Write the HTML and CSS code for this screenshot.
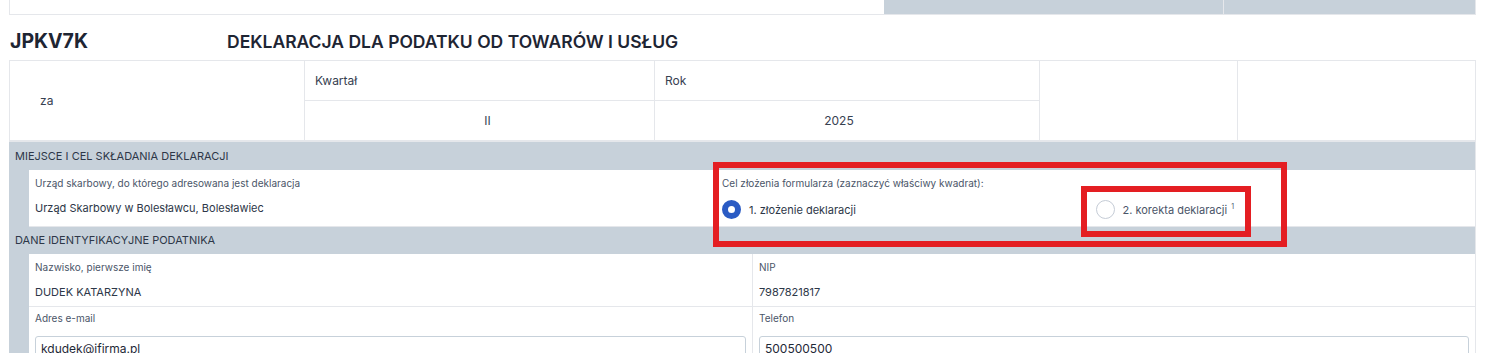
FILE: index.html
```html
<!DOCTYPE html>
<html lang="pl">
<head>
  <meta charset="UTF-8" />
  <meta name="viewport" content="width=device-width, initial-scale=1.0"/>
  <title>JPKV7K</title>
  <link rel="stylesheet" href="styles.css">
</head>
<body>
  <div class="page">
    <!-- end of previous block -->
    <div class="top-strip">
      <div class="top-blank"></div>
      <div class="top-cell"></div>
      <div class="top-cell last"></div>
    </div>

    <div class="title-row">
      <h1 class="code">JPKV7K</h1>
      <h2 class="title">DEKLARACJA DLA PODATKU OD TOWARÓW I USŁUG</h2>
    </div>

    <div class="period">
      <div class="p-za">za</div>
      <div class="p-label quarter">Kwartał</div>
      <div class="p-label year">Rok</div>
      <div class="p-value quarter">II</div>
      <div class="p-value year">2025</div>
      <div class="p-empty first"></div>
      <div class="p-empty last"></div>
    </div>

    <div class="section">
      <div class="section-head">MIEJSCE I CEL SKŁADANIA DEKLARACJI</div>
      <div class="section-body">
        <div class="row purpose">
          <div class="field">
            <div class="label">Urząd skarbowy, do którego adresowana jest deklaracja</div>
            <div class="value">Urząd Skarbowy w Bolesławcu, Bolesławiec</div>
          </div>
          <div class="field">
            <div class="label">Cel złożenia formularza (zaznaczyć właściwy kwadrat):</div>
            <div class="options">
              <label class="option checked"><span class="radio"></span><span>1. złożenie deklaracji</span></label>
              <label class="option"><span class="radio"></span><span>2. korekta deklaracji <sup>1</sup></span></label>
            </div>
          </div>
        </div>
      </div>
    </div>

    <div class="section">
      <div class="section-head">DANE IDENTYFIKACYJNE PODATNIKA</div>
      <div class="section-body">
        <div class="row split">
          <div class="field">
            <div class="label">Nazwisko, pierwsze imię</div>
            <div class="value">DUDEK KATARZYNA</div>
          </div>
          <div class="field">
            <div class="label">NIP</div>
            <div class="value">7987821817</div>
          </div>
        </div>
        <div class="row split contact">
          <div class="field">
            <div class="label">Adres e-mail</div>
            <input class="input" type="text" value="kdudek@ifirma.pl">
          </div>
          <div class="field">
            <div class="label">Telefon</div>
            <input class="input" type="text" value="500500500">
          </div>
        </div>
      </div>
    </div>
  </div>

  <!-- annotation frames -->
  <div class="mark mark-outer"></div>
  <div class="mark mark-inner"></div>
</body>
</html>
```

FILE: styles.css
```css
body {
  margin: 0;
  font-family: Inter, "Noto Sans", sans-serif;
  color: #1f2937;
  background: #fff;
  overflow: hidden;
}
.page {
  margin-left: 9px;
  width: 1467px;
}
.top-strip {
  display: flex;
  height: 14px;
  border-left: 1px solid #e5e7eb;
  border-bottom: 1px solid #e5e7eb;
}
.top-blank {
  width: 874px;
}
.top-cell {
  width: 339px;
  background: #c7d1da;
  border-right: 1px solid #e5e7eb;
}
.top-cell.last {
  flex: 1;
}
.title-row {
  display: flex;
  align-items: baseline;
  height: 45px;
  box-sizing: border-box;
  padding-top: 14px;
}
.code {
  margin: 0;
  width: 217px;
  padding-left: 1px;
  font-size: 19.5px;
  font-weight: 700;
  color: #1e2533;
}
.title {
  margin: 0;
  font-size: 17.5px;
  font-weight: 600;
  color: #1e2533;
}
.period {
  display: grid;
  grid-template-columns: 295px 350px 385px 198px 1fr;
  grid-template-rows: 40px 39px;
  border: 1px solid #e5e7eb;
  border-bottom-width: 2px;
  font-size: 12px;
  color: #374151;
}
.period > div {
  border-right: 1px solid #e5e7eb;
  display: flex;
  align-items: center;
}
.p-za {
  grid-column: 1;
  grid-row: 1 / 3;
  padding-left: 30px;
}
.p-label {
  grid-row: 1;
  padding-left: 10px;
  border-bottom: 1px solid #e5e7eb;
}
.p-value {
  grid-row: 2;
  justify-content: center;
}
.quarter {
  grid-column: 2;
}
.year {
  grid-column: 3;
}
.p-value.quarter {
  padding-left: 16px;
}
.p-value.year {
  padding-right: 16px;
}
.p-empty {
  grid-row: 1 / 3;
}
.p-empty.first {
  grid-column: 4;
}
.p-empty.last {
  grid-column: 5;
  border-right: none !important;
}
.section {
  background: #c7d1da;
  border-right: 1px solid #e5e7eb;
}
.section-head {
  height: 28px;
  line-height: 28px;
  padding-left: 6px;
  font-size: 11px;
  color: #2d3748;
}
.section + .section .section-head {
  height: 27px;
  line-height: 27px;
}
.section-body {
  margin-left: 20px;
  background: #fff;
}
.row {
  display: grid;
  grid-template-columns: 687px 1fr;
  border-bottom: 1px solid #e5e7eb;
  height: 53px;
  box-sizing: border-box;
}
.row.purpose {
  height: 57px;
}
.row.split {
  grid-template-columns: 723px 1fr;
}
.row.split .field + .field {
  border-left: 1px solid #e5e7eb;
}
.row.contact {
  border-bottom: none;
  height: 60px;
}
.row.contact .field {
  padding-top: 4px;
}
.field {
  padding: 6px 6px 0;
}
.label {
  font-size: 10px;
  line-height: 14px;
  color: #4a5568;
}
.value {
  margin-top: 9px;
  font-size: 11px;
  line-height: 18px;
  color: #2d3748;
}
.options {
  display: grid;
  grid-template-columns: 1fr 1fr;
  margin-top: 10px;
}
.option {
  display: flex;
  align-items: center;
  gap: 8px;
  font-size: 11px;
  color: #4a5568;
}
.option.checked {
  color: #2d3748;
}
.option sup {
  font-size: 7px;
  vertical-align: 5px;
  margin-left: 1px;
}
.radio {
  width: 19px;
  height: 19px;
  border: 1px solid #c5ccd6;
  border-radius: 50%;
  box-sizing: border-box;
  background: #fff;
}
.option.checked .radio {
  border: 6px solid #2a5bc4;
}
.input {
  display: block;
  box-sizing: border-box;
  width: 100%;
  height: 24px;
  margin-top: 11px;
  padding: 0 5px;
  border: 1px solid #c7d1da;
  border-radius: 3px;
  font-family: Inter, "Noto Sans", sans-serif;
  font-size: 12px;
  color: #1f2937;
}
.mark {
  position: absolute;
  border: 6px solid #e41e22;
  box-sizing: border-box;
}
.mark-outer {
  left: 713px;
  top: 162px;
  width: 574px;
  height: 85px;
}
.mark-inner {
  left: 1081px;
  top: 186px;
  width: 170px;
  height: 51px;
}
```
